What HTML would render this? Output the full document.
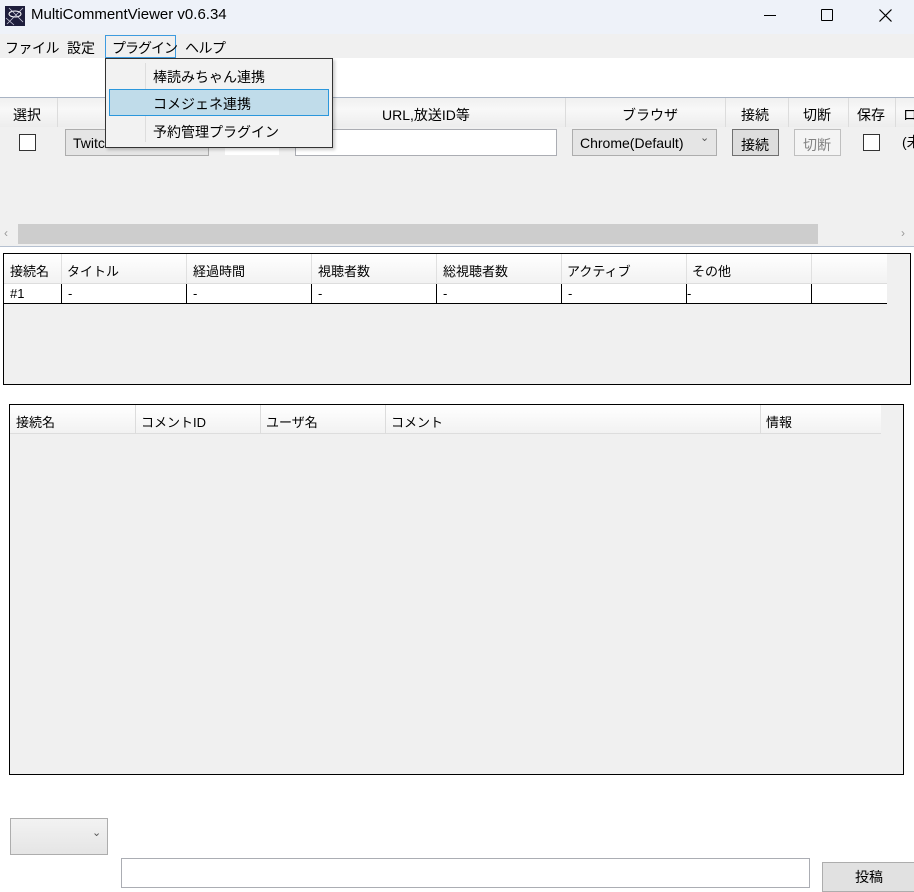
<!DOCTYPE html>
<html><head><meta charset="utf-8"><style>
*{margin:0;padding:0;box-sizing:border-box}
body{width:914px;height:881px;overflow:hidden;background:#fff;font-family:"Liberation Sans","Noto Sans CJK JP",sans-serif;font-size:14px;color:#000;position:relative}
.a{position:absolute}
.t{font-size:14px;white-space:nowrap}
.sm{font-size:13px}
</style></head><body>
<!-- title bar -->
<div class="a" style="left:0;top:0;width:914px;height:34px;background:#eef2f9"></div>
<svg class="a" style="left:5px;top:6px" width="20" height="20" viewBox="0 0 20 20"><rect width="20" height="20" fill="#1e1e3c"/><ellipse cx="10" cy="8" rx="6" ry="3" fill="none" stroke="#fff" stroke-width="1"/><path d="M2 18L18 2M4 2l14 14M1 12l8 7" stroke="#ccd" stroke-width="0.8"/></svg>
<div class="a t" style="left:31px;top:6px;font-size:15px">MultiCommentViewer v0.6.34</div>
<div class="a" style="left:764px;top:15px;width:12px;height:1px;background:#000"></div>
<div class="a" style="left:821px;top:9px;width:12px;height:12px;border:1.3px solid #000;border-radius:1px"></div>
<svg class="a" style="left:879px;top:9px" width="13" height="13"><path d="M0.5 0.5L12.5 12.5M12.5 0.5L0.5 12.5" stroke="#000" stroke-width="1.2"/></svg>
<!-- menu -->
<div class="a" style="left:0;top:34px;width:914px;height:24px;background:#f0f0f0"></div>
<div class="a t" style="left:5px;top:38px;letter-spacing:-0.5px">ファイル</div>
<div class="a t" style="left:67px;top:38px">設定</div>
<div class="a" style="left:105px;top:35px;width:71px;height:23px;border:1px solid #3d9be0;background:#f0f0f0"></div>
<div class="a t" style="left:112px;top:38px;letter-spacing:-1px">プラグイン</div>
<div class="a t" style="left:185px;top:38px;letter-spacing:-0.5px">ヘルプ</div>
<!-- header row -->
<div class="a" style="left:0;top:97px;width:914px;height:1px;background:#a9b4c4"></div>
<div class="a" style="left:0;top:98px;width:914px;height:148px;background:#f0f0f0"></div>
<div class="a" style="left:0;top:98px;width:914px;height:29px;background:linear-gradient(#f0f0f0,#f8f8f8 40%,#ededed)"></div>
<div class="a" style="left:57px;top:98px;width:1px;height:29px;background:#dcdcdc"></div>
<div class="a" style="left:565px;top:98px;width:1px;height:29px;background:#dcdcdc"></div>
<div class="a" style="left:725px;top:98px;width:1px;height:29px;background:#dcdcdc"></div>
<div class="a" style="left:788px;top:98px;width:1px;height:29px;background:#dcdcdc"></div>
<div class="a" style="left:848px;top:98px;width:1px;height:29px;background:#dcdcdc"></div>
<div class="a" style="left:895px;top:98px;width:1px;height:29px;background:#dcdcdc"></div>
<div class="a t" style="left:13px;top:105px">選択</div>
<div class="a t" style="left:382px;top:105px">URL,放送ID等</div>
<div class="a t" style="left:622px;top:105px">ブラウザ</div>
<div class="a t" style="left:741px;top:105px">接続</div>
<div class="a t" style="left:803px;top:105px">切断</div>
<div class="a t" style="left:857px;top:105px">保存</div>
<div class="a t" style="left:903px;top:105px">ロ</div>
<!-- row -->
<div class="a" style="left:19px;top:134px;width:17px;height:17px;border:1px solid #333;background:#fff"></div>
<div class="a" style="left:65px;top:129px;width:144px;height:27px;border:1px solid #adadad;background:#e5e5e5"></div>
<div class="a t" style="left:73px;top:135px">Twitch</div>
<div class="a" style="left:225px;top:129px;width:54px;height:26px;background:#fff"></div>
<div class="a" style="left:295px;top:129px;width:262px;height:27px;border:1px solid #abadb3;background:#fff"></div>
<div class="a" style="left:572px;top:129px;width:145px;height:27px;border:1px solid #adadad;background:#e5e5e5"></div>
<div class="a t" style="left:580px;top:135px">Chrome(Default)</div>
<div class="a t" style="left:700px;top:131px;font-size:11px;color:#555">⌄</div>
<div class="a" style="left:732px;top:129px;width:47px;height:27px;border:1px solid #707070;background:#dddddd"></div>
<div class="a t" style="left:741px;top:135px">接続</div>
<div class="a" style="left:794px;top:129px;width:47px;height:27px;border:1px solid #bfbfbf;background:#f4f4f4"></div>
<div class="a t" style="left:803px;top:135px;color:#838383">切断</div>
<div class="a" style="left:863px;top:134px;width:17px;height:17px;border:1px solid #333;background:#fff"></div>
<div class="a t" style="left:902px;top:132px">(未</div>
<!-- scrollbar -->
<div class="a" style="left:18px;top:224px;width:800px;height:20px;background:#cdcdcd"></div>
<div class="a t" style="left:4px;top:226px;font-size:12px;color:#999">‹</div>
<div class="a t" style="left:901px;top:226px;font-size:12px;color:#999">›</div>
<div class="a" style="left:0;top:246px;width:914px;height:1px;background:#b5c0d0"></div>
<!-- table 1 -->
<div class="a" style="left:3px;top:253px;width:908px;height:132px;border:1px solid #000;background:#f0f0f0"></div>
<div class="a" style="left:4px;top:254px;width:883px;height:29px;background:linear-gradient(#fff,#f2f2f2)"></div>
<div class="a" style="left:4px;top:283px;width:883px;height:21px;background:#fff;border-bottom:1px solid #000;border-top:1px solid #ddd"></div>
<div class="a sm" style="left:10px;top:261px">接続名</div>
<div class="a sm" style="left:67px;top:261px">タイトル</div>
<div class="a sm" style="left:193px;top:261px">経過時間</div>
<div class="a sm" style="left:318px;top:261px">視聴者数</div>
<div class="a sm" style="left:443px;top:261px">総視聴者数</div>
<div class="a sm" style="left:567px;top:261px">アクティブ</div>
<div class="a sm" style="left:692px;top:261px">その他</div>
<div class="a" style="left:61px;top:284px;width:1px;height:20px;background:#000"></div>
<div class="a" style="left:186px;top:284px;width:1px;height:20px;background:#000"></div>
<div class="a" style="left:311px;top:284px;width:1px;height:20px;background:#000"></div>
<div class="a" style="left:436px;top:284px;width:1px;height:20px;background:#000"></div>
<div class="a" style="left:561px;top:284px;width:1px;height:20px;background:#000"></div>
<div class="a" style="left:686px;top:284px;width:1px;height:20px;background:#000"></div>
<div class="a" style="left:811px;top:284px;width:1px;height:20px;background:#000"></div>
<div class="a" style="left:61px;top:254px;width:1px;height:29px;background:#e0e0e0"></div>
<div class="a" style="left:186px;top:254px;width:1px;height:29px;background:#e0e0e0"></div>
<div class="a" style="left:311px;top:254px;width:1px;height:29px;background:#e0e0e0"></div>
<div class="a" style="left:436px;top:254px;width:1px;height:29px;background:#e0e0e0"></div>
<div class="a" style="left:561px;top:254px;width:1px;height:29px;background:#e0e0e0"></div>
<div class="a" style="left:686px;top:254px;width:1px;height:29px;background:#e0e0e0"></div>
<div class="a" style="left:811px;top:254px;width:1px;height:29px;background:#e0e0e0"></div>
<div class="a sm" style="left:10px;top:286px">#1</div>
<div class="a sm" style="left:68px;top:286px">-</div>
<div class="a sm" style="left:193px;top:286px">-</div>
<div class="a sm" style="left:318px;top:286px">-</div>
<div class="a sm" style="left:443px;top:286px">-</div>
<div class="a sm" style="left:568px;top:286px">-</div>
<div class="a sm" style="left:687px;top:286px">-</div>
<!-- table 2 -->
<div class="a" style="left:9px;top:404px;width:895px;height:371px;border:1px solid #000;background:#f0f0f0"></div>
<div class="a" style="left:10px;top:405px;width:871px;height:29px;background:linear-gradient(#fff,#f2f2f2);border-bottom:1px solid #ddd"></div>
<div class="a" style="left:135px;top:405px;width:1px;height:29px;background:#dcdcdc"></div>
<div class="a" style="left:260px;top:405px;width:1px;height:29px;background:#dcdcdc"></div>
<div class="a" style="left:385px;top:405px;width:1px;height:29px;background:#dcdcdc"></div>
<div class="a" style="left:760px;top:405px;width:1px;height:29px;background:#dcdcdc"></div>
<div class="a sm" style="left:16px;top:412px">接続名</div>
<div class="a sm" style="left:141px;top:412px">コメントID</div>
<div class="a sm" style="left:266px;top:412px">ユーザ名</div>
<div class="a sm" style="left:391px;top:412px">コメント</div>
<div class="a sm" style="left:766px;top:412px">情報</div>
<!-- bottom controls -->
<div class="a" style="left:10px;top:818px;width:98px;height:37px;border:1px solid #adadad;background:linear-gradient(#f2f2f2,#e5e5e5)"></div>
<div class="a t" style="left:92px;top:826px;font-size:11px;color:#555">⌄</div>
<div class="a" style="left:121px;top:858px;width:689px;height:30px;border:1px solid #abadb3;background:#fff"></div>
<div class="a" style="left:822px;top:862px;width:100px;height:30px;border:1px solid #adadad;background:#e1e1e1"></div>
<div class="a t" style="left:855px;top:867px">投稿</div>
<!-- dropdown -->
<div class="a" style="left:105px;top:58px;width:228px;height:90px;border:1px solid #333;background:#f2f2f2;box-shadow:2px 2px 3px rgba(0,0,0,.2)"></div>
<div class="a" style="left:145px;top:63px;width:1px;height:79px;background:#ddd"></div>
<div class="a" style="left:109px;top:89px;width:220px;height:27px;border:1px solid #2b97dc;background:#c0dcea"></div>
<div class="a t" style="left:153px;top:67px">棒読みちゃん連携</div>
<div class="a t" style="left:153px;top:94px">コメジェネ連携</div>
<div class="a t" style="left:153px;top:122px">予約管理プラグイン</div>
</body></html>
